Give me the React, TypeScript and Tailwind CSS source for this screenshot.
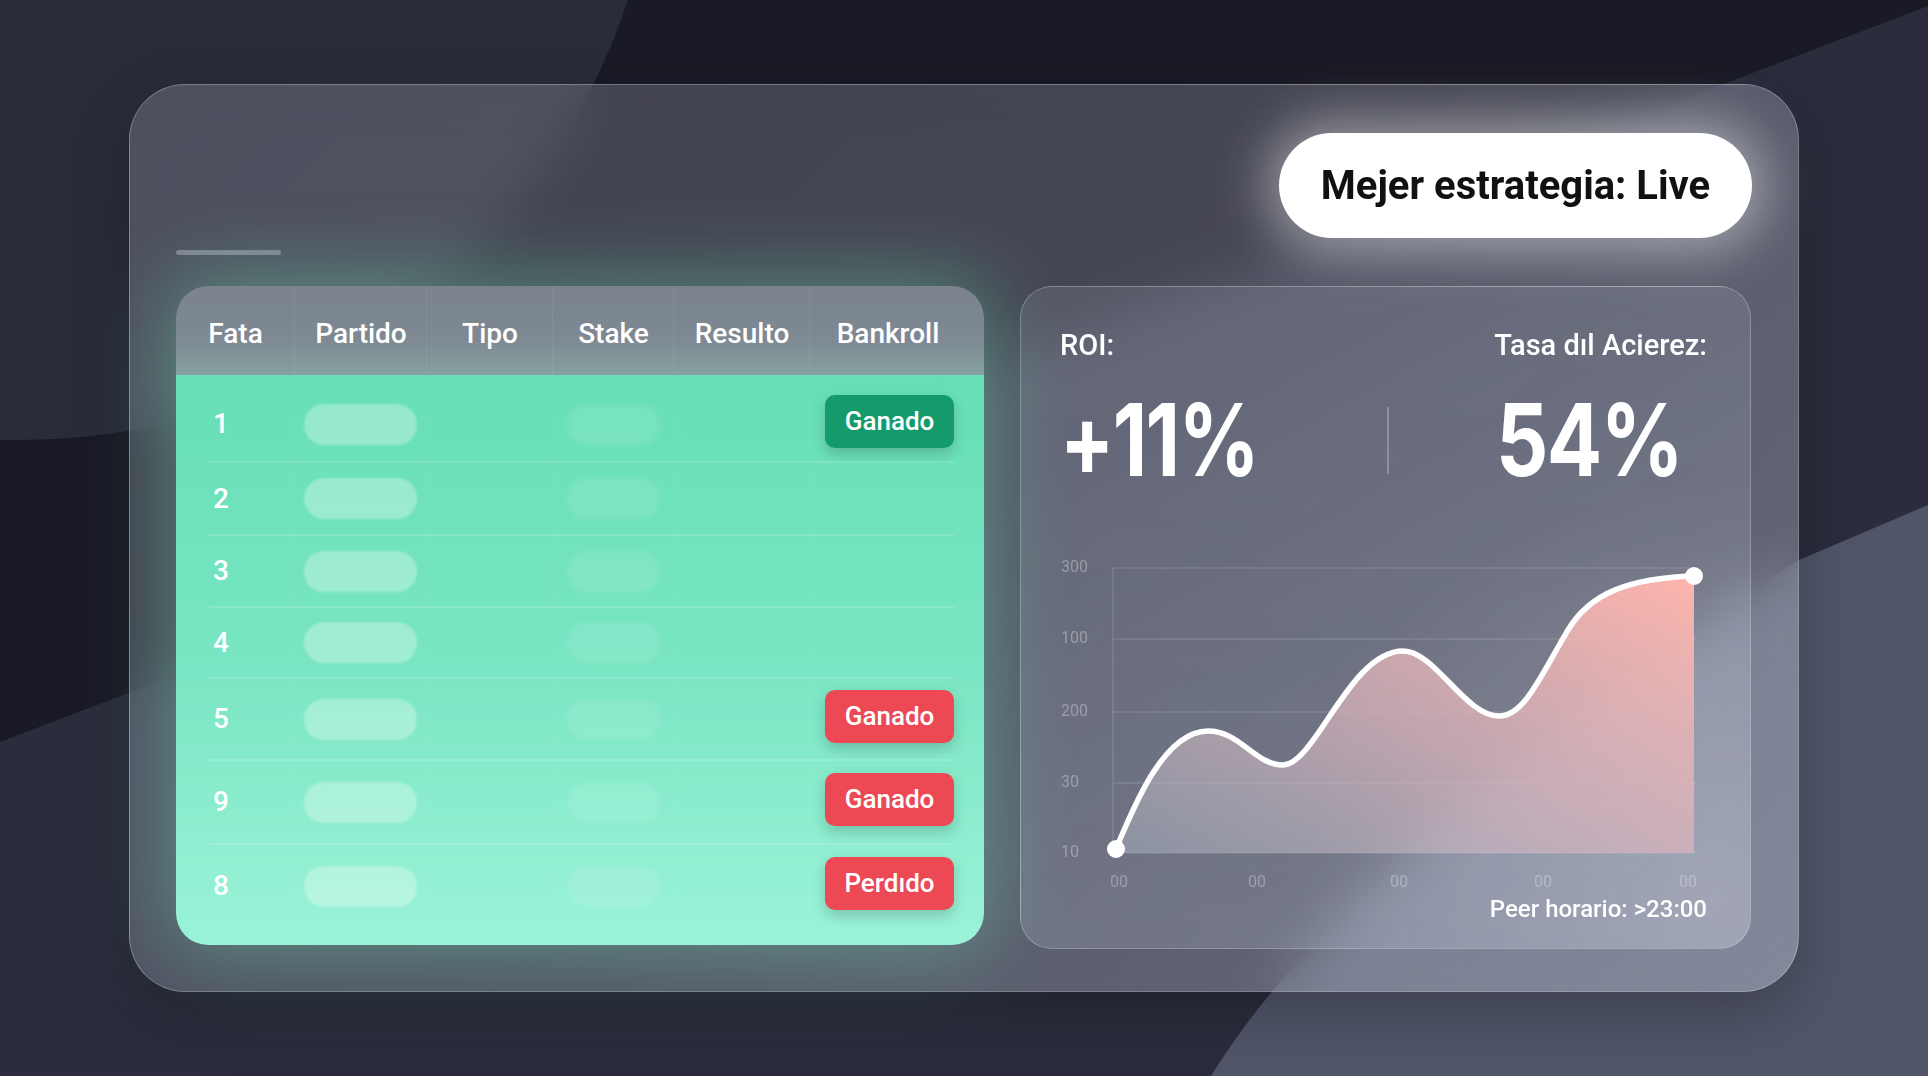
import React from "react";

type Badge = { label: string; tone: "green" | "red" };
type Row = { n: string; h: string; badge?: Badge };

const rows: Row[] = [
  { n: "1", h: "h-[74px]", badge: { label: "Ganado", tone: "green" } },
  { n: "2", h: "h-[71px]" },
  { n: "3", h: "h-[70px]" },
  { n: "4", h: "h-[69px]" },
  { n: "5", h: "h-[80px]", badge: { label: "Ganado", tone: "red" } },
  { n: "9", h: "h-[82px]", badge: { label: "Ganado", tone: "red" } },
  { n: "8", h: "h-[82px]", badge: { label: "Perdıdo", tone: "red" } },
];

const headers = ["Fata", "Partido", "Tipo", "Stake", "Resulto", "Bankroll"];

function Background() {
  return (
    <svg className="absolute inset-0" width="1928" height="1076" viewBox="0 0 1928 1076">
      <rect x="0" y="0" width="1928" height="1076" fill="#1a1a26" />
      <circle cx="20" cy="-200" r="640" fill="#2a2c39" />
      <path d="M0,742 L1928,6 L1928,1076 L0,1076 Z" fill="#2b2d3d" />
      <path d="M1928,505 L1799,560 Q1350,850 1211,1076 L1928,1076 Z" fill="#50556a" />
    </svg>
  );
}

function Table() {
  return (
    <div className="relative w-[808px] h-[659px] rounded-[32px] overflow-hidden shadow-[0_0_80px_6px_rgba(110,231,183,0.4)] flex flex-col shrink-0">
      <div className="grid grid-cols-[119px_132px_126px_121px_136px_174px] h-[89px] shrink-0 bg-[linear-gradient(180deg,#7a838e_0%,#7e8993_60%,#86a19f_100%)]">
        {headers.map((h, i) => (
          <div
            key={h}
            className={
              "flex items-center justify-center pt-[6px] text-[28px] font-medium text-white " +
              (i === 5 ? "pr-[18px]" : "")
            }
          >
            {h}
          </div>
        ))}
      </div>
      <div className="flex-1 flex flex-col pt-[12px] bg-[linear-gradient(180deg,#66dfb6_0%,#79e5c3_50%,#9bf3d8_100%)]">
        {rows.map((r, idx) => (
          <React.Fragment key={idx}>
            <div className={"grid grid-cols-[119px_132px_126px_121px_136px_174px] items-center " + r.h}>
              <div className="pl-[37px] text-[28px] font-medium text-white">{r.n}</div>
              <div>
                <div className="ml-[9px] w-[113px] h-[41px] rounded-[20px] bg-white/30 blur-[1px]" />
              </div>
              <div />
              <div>
                <div className="ml-[14px] w-[93px] h-[41px] rounded-[20px] bg-white/10 blur-[2px]" />
              </div>
              <div />
              <div>
                {r.badge && (
                  <div
                    className={
                      "ml-[15px] mb-[5px] w-[129px] h-[53px] rounded-[10px] flex items-center justify-center text-[26px] font-medium text-white shadow-[0_6px_14px_rgba(0,0,0,0.18)] " +
                      (r.badge.tone === "green" ? "bg-[#149a6b]" : "bg-[#ec4954]")
                    }
                  >
                    {r.badge.label}
                  </div>
                )}
              </div>
            </div>
            {idx < rows.length - 1 && <div className="ml-[33px] mr-[30px] h-[2px] bg-white/15" />}
          </React.Fragment>
        ))}
      </div>
      <div className="pointer-events-none absolute inset-0 grid grid-cols-[119px_132px_126px_121px_136px_174px]">
        <div className="border-r border-white/[0.06]" />
        <div className="border-r border-white/[0.06]" />
        <div className="border-r border-white/[0.06]" />
        <div className="border-r border-white/[0.06]" />
        <div className="border-r border-white/[0.06]" />
        <div />
      </div>
    </div>
  );
}

function Chart() {
  const curve =
    "M56,296 C75,250 105,178 148,178 C180,178 195,212 223,212 C255,212 290,98 343,98 C375,98 405,163 439,163 C465,163 482,120 508,77 C530,40 570,25 634,23";
  const ys = [
    { y: 15, t: "300" },
    { y: 86, t: "100" },
    { y: 159, t: "200" },
    { y: 230, t: "30" },
    { y: 300, t: "10" },
  ];
  const xs = [59, 197, 339, 483, 628];
  return (
    <svg width="649" height="340" viewBox="0 0 649 340" className="block overflow-visible">
      <defs>
        <linearGradient id="areaFill" x1="0.05" y1="1" x2="0.95" y2="0">
          <stop offset="0" stopColor="#b4bcc8" stopOpacity="0.45" />
          <stop offset="0.45" stopColor="#dab5bd" stopOpacity="0.72" />
          <stop offset="1" stopColor="#ffb6ae" stopOpacity="0.97" />
        </linearGradient>
      </defs>
      {ys.map((g) => (
        <g key={g.t + g.y}>
          <line x1="53" x2="636" y1={g.y} y2={g.y} stroke="rgba(255,255,255,0.13)" strokeWidth="1.5" />
          <text
            x="1"
            y={g.y}
            dominantBaseline="middle"
            fontSize="16"
            fill="rgba(255,255,255,0.32)"
            fontFamily="Roboto, sans-serif"
          >
            {g.t}
          </text>
        </g>
      ))}
      <line x1="53" x2="53" y1="15" y2="300" stroke="rgba(255,255,255,0.13)" strokeWidth="1.5" />
      <path d={curve + " L634,300 L56,300 Z"} fill="url(#areaFill)" />
      <path d={curve} fill="none" stroke="#ffffff" strokeWidth="5.5" strokeLinecap="round" strokeLinejoin="round" />
      <circle cx="56" cy="296" r="9" fill="#ffffff" />
      <circle cx="634" cy="23" r="9" fill="#ffffff" />
      {xs.map((x, i) => (
        <text
          key={i}
          x={x}
          y="330"
          textAnchor="middle"
          dominantBaseline="middle"
          fontSize="16"
          fill="rgba(255,255,255,0.3)"
          fontFamily="Roboto, sans-serif"
        >
          00
        </text>
      ))}
    </svg>
  );
}

function StatsCard() {
  return (
    <div className="w-[731px] h-[663px] shrink-0 rounded-[32px] border-[1.5px] border-white/25 bg-[radial-gradient(circle_at_95%_92%,rgba(255,255,255,0.16),transparent_45%),linear-gradient(180deg,rgba(222,232,255,0.11),rgba(222,232,255,0.16))] pl-[39px] pr-[43px] flex flex-col">
      <div className="mt-[42px] h-[34px] flex items-center justify-between text-[29px] font-medium text-white">
        <span>ROI:</span>
        <span>Tasa dıl Acierez:</span>
      </div>
      <div className="mt-[27px] h-[100px] flex items-center">
        <div className="w-[327px] shrink-0">
          <div className="font-['Inter',sans-serif] font-bold text-[100px] leading-none text-white origin-left scale-x-[0.8] tracking-[-0.02em] whitespace-nowrap">
            +11%
          </div>
        </div>
        <div className="w-[2px] h-[67px] shrink-0 bg-white/25" />
        <div className="ml-[107px] shrink-0">
          <div className="font-['Inter',sans-serif] font-bold text-[100px] leading-none text-white origin-left scale-x-[0.82] tracking-[-0.02em] whitespace-nowrap">
            54%
          </div>
        </div>
      </div>
      <div className="mt-[63px]">
        <Chart />
      </div>
      <div className="mt-[2px] text-right text-[24px] leading-[28px] font-medium text-white">Peer horario: &gt;23:00</div>
    </div>
  );
}

export default function App() {
  return (
    <div className="relative w-[1928px] h-[1076px] overflow-hidden bg-[#1a1a26] font-['Roboto',sans-serif]">
      <Background />
      <div className="relative pt-[84px] pl-[129px]">
        <div className="w-[1670px] h-[908px] rounded-[56px] border border-white/25 backdrop-blur-xl bg-[linear-gradient(135deg,rgba(235,240,255,0.19),rgba(235,240,255,0.21)_50%,rgba(235,240,255,0.33))] shadow-[0_20px_60px_rgba(0,0,0,0.25)] px-[46px] pt-[48px] flex flex-col">
          <div className="flex items-start justify-between">
            <div className="mt-[117px] w-[105px] h-[5px] rounded-full bg-[#80838f]" />
            <div className="w-[473px] h-[105px] rounded-full bg-white shadow-[0_0_50px_14px_rgba(255,255,255,0.42)] flex items-center justify-center text-[40px] font-bold text-[#111114]">
              Mejer estrategia: Live
            </div>
          </div>
          <div className="mt-[31px] flex items-start gap-[36px]">
            <Table />
            <StatsCard />
          </div>
        </div>
      </div>
    </div>
  );
}
